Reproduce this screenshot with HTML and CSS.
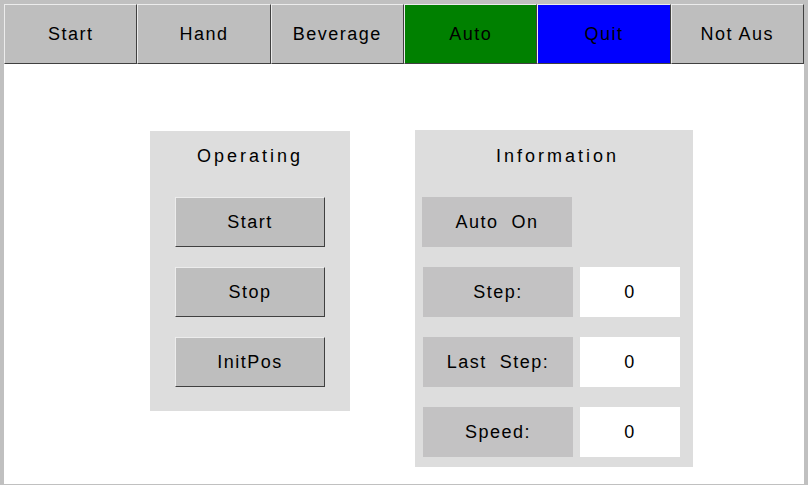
FILE: index.html
```html
<!DOCTYPE html>
<html>
<head>
<meta charset="utf-8">
<link rel="stylesheet" href="styles.css">
</head>
<body>
<div class="frame">
  <nav class="nav">
    <div class="nav-btn">Start</div>
    <div class="nav-btn">Hand</div>
    <div class="nav-btn">Beverage</div>
    <div class="nav-btn nav-auto">Auto</div>
    <div class="nav-btn nav-quit">Quit</div>
    <div class="nav-btn">Not Aus</div>
  </nav>
  <main class="main">
    <section class="panel panel-op">
      <div class="panel-title">Operating</div>
      <div class="op-list">
        <div class="op-btn">Start</div>
        <div class="op-btn">Stop</div>
        <div class="op-btn">InitPos</div>
      </div>
    </section>
    <section class="panel panel-info">
      <div class="panel-title">Information</div>
      <div class="info-list">
        <div class="label auto-on">Auto&nbsp; On</div>
        <div class="info-row">
          <div class="label">Step:</div>
          <div class="value">0</div>
        </div>
        <div class="info-row">
          <div class="label">Last&nbsp; Step:</div>
          <div class="value">0</div>
        </div>
        <div class="info-row">
          <div class="label">Speed:</div>
          <div class="value">0</div>
        </div>
      </div>
    </section>
  </main>
</div>
</body>
</html>
```
FILE: styles.css
```css
* { box-sizing: border-box; }
html, body { margin: 0; padding: 0; }
body {
  font-family: "Liberation Sans", Arial, sans-serif;
  font-size: 18px;
  letter-spacing: 1.5px;
  color: #000;
  background: #fff;
}
.frame {
  width: 808px;
  height: 485px;
  background: #c0c0c0;
  padding: 4px 4px 1px 4px;
  display: flex;
  flex-direction: column;
}
.nav {
  display: flex;
  height: 60px;
}
.nav-btn {
  flex: 1;
  display: flex;
  align-items: center;
  justify-content: center;
  padding-top: 1px;
  background: #bebebe;
  border-top: 1px solid #ececec;
  border-left: 1px solid #ececec;
  border-right: 1px solid #404040;
  border-bottom: 1px solid #404040;
}
.nav-auto { background: #008000; }
.nav-quit { background: #0000ff; }
.main {
  flex: 1;
  background: #fff;
  display: flex;
  align-items: flex-start;
  padding: 66px 0 0 146px;
  gap: 65px;
}
.panel {
  background: #dddddd;
  display: flex;
  flex-direction: column;
}
.panel-title {
  line-height: 20px;
  text-align: center;
  letter-spacing: 3px;
}
.panel-op {
  width: 200px;
  height: 280px;
  margin-top: 1px;
  padding-top: 15px;
  align-items: center;
}
.op-list {
  margin-top: 31px;
  display: flex;
  flex-direction: column;
  gap: 20px;
}
.op-btn {
  width: 150px;
  height: 50px;
  display: flex;
  align-items: center;
  justify-content: center;
  padding-top: 1px;
  background: #bebebe;
  border-top: 1px solid #ececec;
  border-left: 1px solid #ececec;
  border-right: 1px solid #404040;
  border-bottom: 1px solid #404040;
}
.panel-info {
  width: 278px;
  height: 337px;
  padding: 16px 0 10px 7px;
}
.info-list {
  margin-top: 31px;
  display: flex;
  flex-direction: column;
  gap: 20px;
}
.info-row {
  display: flex;
  gap: 7px;
  padding-left: 1px;
}
.label {
  width: 150px;
  height: 50px;
  padding-top: 1px;
  background: #c3c2c3;
  display: flex;
  align-items: center;
  justify-content: center;
}
.value {
  width: 100px;
  height: 50px;
  padding-top: 1px;
  background: #fff;
  display: flex;
  align-items: center;
  justify-content: center;
}
```
